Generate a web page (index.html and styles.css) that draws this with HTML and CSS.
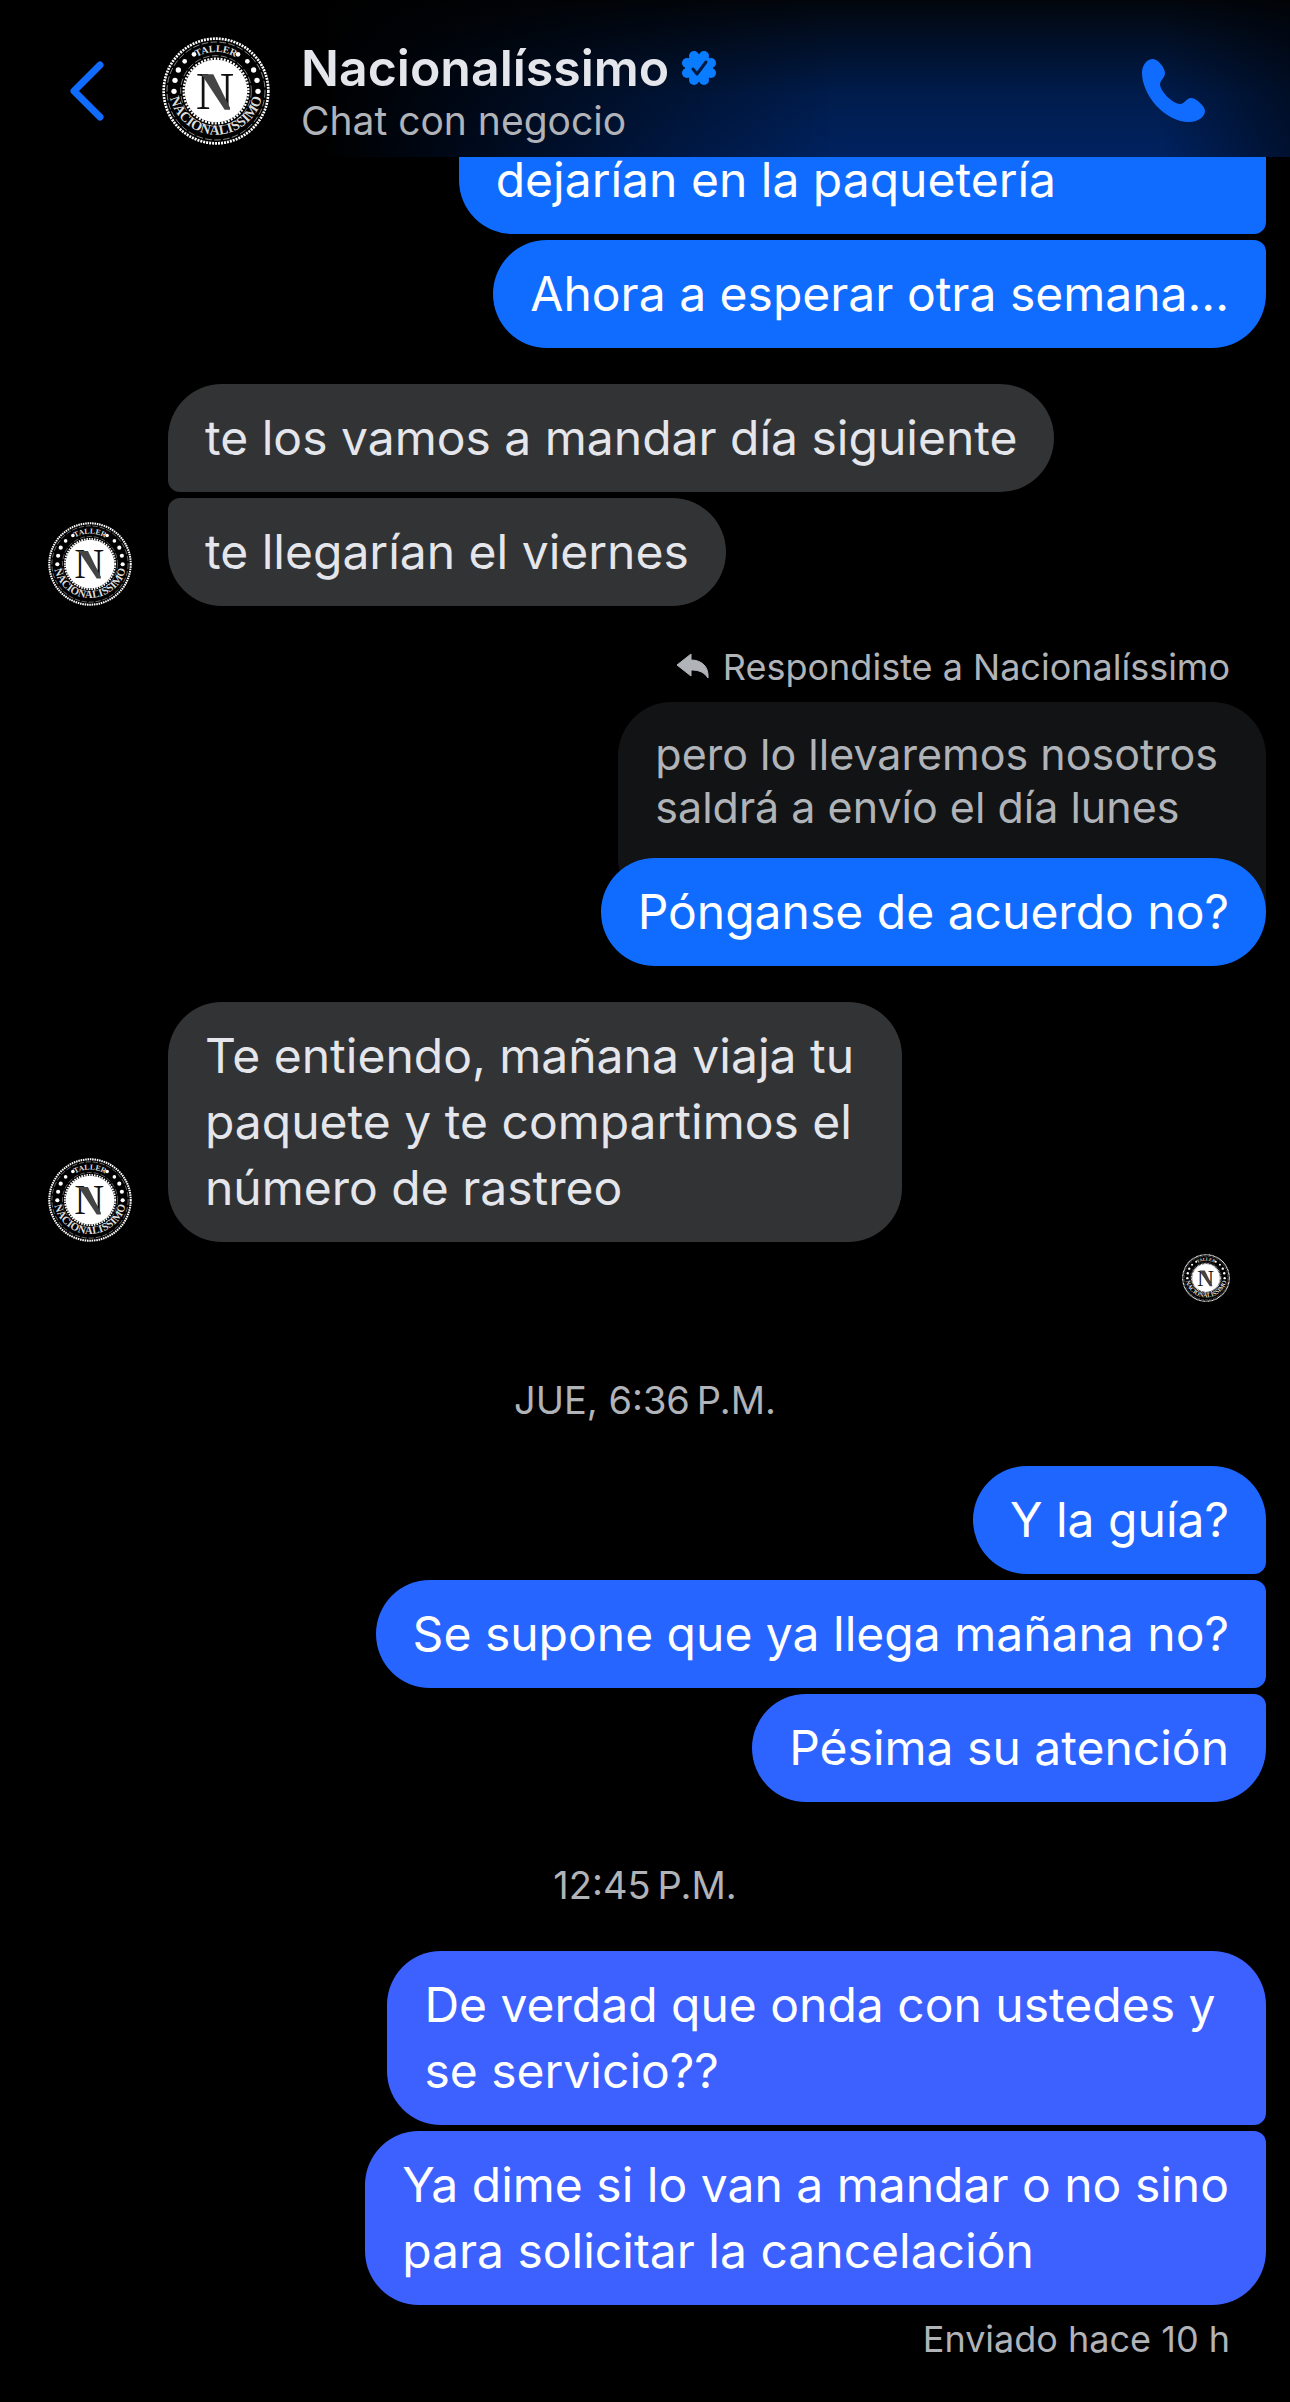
FILE: index.html
```
<!DOCTYPE html>
<html lang="es">
<head>
    <meta charset="UTF-8">
    <meta name="viewport" content="width=device-width, initial-scale=1.0">
    <title>Nacionalíssimo</title>
    <link rel="stylesheet" href="styles.css">
</head>
<body>
    <header class="header">
        <button class="icon-button back" aria-label="Atrás">
            <svg width="36" height="60" viewBox="0 0 36 60"><path d="M32 4 L6 30 L32 56" fill="none" stroke="#106cff" stroke-width="7" stroke-linecap="round" stroke-linejoin="round"/></svg>
        </button>
        <svg class="avatar-large" viewBox="-162 -162 324 324" role="img" aria-label="Nacionalíssimo">
            <!-- Logo, reused by the small avatars -->
            <g id="logo">
                <path id="arc-top" d="M-117 0 A117 117 0 0 1 117 0" fill="none"/>
                <path id="arc-bottom" d="M-141 -10 A141 141 0 1 0 141 -10" fill="none"/>
                <circle r="160" fill="#000"/>
                <circle r="157" fill="none" stroke="#fff" stroke-width="8" stroke-dasharray="6 3"/>
                <circle r="147" fill="none" stroke="#ccc" stroke-width="2" stroke-dasharray="20 7"/>
                <circle r="106" fill="none" stroke="#bbb" stroke-width="2" stroke-dasharray="20 7"/>
                <circle r="97" fill="none" stroke="#fff" stroke-width="7" stroke-dasharray="6 4"/>
                <circle r="94" fill="#fff"/>
                <g fill="#fff">
                    <circle cx="-126" cy="1" r="8"/><circle cx="126" cy="1" r="8"/>
                    <circle cx="-123" cy="-32" r="8"/><circle cx="123" cy="-32" r="8"/>
                    <circle cx="-113" cy="-63" r="8"/><circle cx="113" cy="-63" r="8"/>
                    <circle cx="-94" cy="-89" r="7"/><circle cx="94" cy="-89" r="7"/>
                    <circle cx="-66" cy="-110" r="7"/><circle cx="66" cy="-110" r="7"/>
                </g>
                <text class="logo-top"><textPath href="#arc-top" startOffset="50%">TALLER</textPath></text>
                <text class="logo-bottom"><textPath href="#arc-bottom" startOffset="50%">NACIONALISSIMO</textPath></text>
                <text class="logo-letter" x="-3" y="54">N</text>
                <path d="M-44 -50 H-8 L42 50 V56 H26 Z" fill="#444"/>
            </g>
        </svg>
        <div class="header-info">
            <h1 class="name">Nacionalíssimo
                <svg class="badge" viewBox="0 0 36 36" aria-label="Verificado"><g fill="#0a7cff"><circle cx="18" cy="18" r="14"/><circle cx="13" cy="6" r="5"/><circle cx="23" cy="6" r="5"/><circle cx="30" cy="13" r="5"/><circle cx="30" cy="23" r="5"/><circle cx="23" cy="30" r="5"/><circle cx="13" cy="30" r="5"/><circle cx="6" cy="23" r="5"/><circle cx="6" cy="13" r="5"/></g><path d="M12 19 L16 24 L25 12" fill="none" stroke="#001a40" stroke-width="3" stroke-linecap="round" stroke-linejoin="round"/></svg>
            </h1>
            <p class="subtitle">Chat con negocio</p>
        </div>
        <button class="icon-button call" aria-label="Llamar">
            <svg width="64" height="64" viewBox="0 0 64 64"><path d="M0 14 C0 6 5 0 11 0 C16 0 23 9 23 14 C23 19 18 21 18 26 C19 33 31 45 38 45 C43 45 44 39 49 39 C54 39 63 47 63 52 C63 57 57 63 47 63 C22 63 0 35 0 14 Z" fill="#106cff"/></svg>
        </button>
    </header>

    <main class="chat">
        <div class="group sent">
            <p class="bubble clipped">dejarían en la paquetería</p>
            <p class="bubble">Ahora a esperar otra semana...</p>
        </div>

        <div class="row">
            <svg class="avatar" viewBox="-162 -162 324 324" aria-hidden="true"><use href="#logo"/></svg>
            <div class="group received">
                <p class="bubble">te los vamos a mandar día siguiente</p>
                <p class="bubble">te llegarían el viernes</p>
            </div>
        </div>

        <div class="group sent reply">
            <p class="reply-label">
                <svg width="34" height="28" viewBox="0 0 34 28" aria-hidden="true"><path d="M1 12 L15 1 V7 C26 7 33 14 32 25 C28 19 23 17 15 17 V23 Z" fill="#b0b3b8" stroke="#b0b3b8" stroke-linejoin="round"/></svg>
                Respondiste a Nacionalíssimo
            </p>
            <blockquote class="quote">pero lo llevaremos nosotros<br>saldrá a envío el día lunes</blockquote>
            <p class="bubble">Pónganse de acuerdo no?</p>
        </div>

        <div class="row">
            <svg class="avatar" viewBox="-162 -162 324 324" aria-hidden="true"><use href="#logo"/></svg>
            <div class="group received">
                <p class="bubble">Te entiendo, mañana viaja tu<br>paquete y te compartimos el&nbsp;<br>número de rastreo</p>
            </div>
        </div>
        <svg class="seen" viewBox="-162 -162 324 324" role="img" aria-label="Visto por Nacionalíssimo"><use href="#logo"/></svg>

        <time class="date">JUE, 6:36&#8201;P.M.</time>

        <div class="group sent tone-1">
            <p class="bubble">Y la guía?</p>
            <p class="bubble">Se supone que ya llega mañana no?</p>
            <p class="bubble">Pésima su atención</p>
        </div>

        <time class="date">12:45&#8201;P.M.</time>

        <div class="group sent tone-2">
            <p class="bubble">De verdad que onda con ustedes y&nbsp;<br>se servicio??</p>
            <p class="bubble">Ya dime si lo van a mandar o no sino<br>para solicitar la cancelación</p>
        </div>
        <p class="status">Enviado hace 10 h</p>
    </main>
</body>
</html>
```
FILE: styles.css
```
* {
    box-sizing: border-box;
}
body {
    margin: 0;
    background: #000;
    color: #e4e6eb;
    font-family: Inter, "Liberation Sans", sans-serif;
}
h1, p, blockquote {
    margin: 0;
}

/* Logo lettering */
.logo-top,
.logo-bottom,
.logo-letter {
    font-family: "Liberation Serif", serif;
    text-anchor: middle;
}
.logo-top {
    font-size: 30px;
    font-weight: bold;
    fill: #ddd;
}
.logo-bottom {
    font-size: 42px;
    font-weight: bold;
    fill: #ddd;
}
.logo-letter {
    font-size: 160px;
    fill: #111;
}

/* Header */
.header {
    position: relative;
    z-index: 1;
    display: flex;
    align-items: center;
    height: 157px;
    padding: 24px 84px 0 68px;
    background:
        linear-gradient(to right, #000 25%, transparent 65%, transparent 90%, rgba(0, 0, 0, 0.5)),
        linear-gradient(#02060c, #001c4c 60%, #002260);
}
.icon-button {
    display: flex;
    padding: 0;
    border: 0;
    background: none;
}
.avatar-large {
    width: 108px;
    height: 108px;
    margin: 0 31px 0 58px;
}
.header-info {
    flex: 1;
    padding-top: 6px;
}
.name {
    display: flex;
    align-items: center;
    gap: 12px;
    font-size: 50px;
    line-height: 54px;
    font-weight: 600;
}
.badge {
    width: 36px;
    height: 36px;
}
.subtitle {
    font-size: 39px;
    line-height: 52px;
    color: #b0b3b8;
}

/* Messages */
.chat {
    display: flex;
    flex-direction: column;
    margin-top: -10px;
    padding: 0 24px 36px;
}
.group {
    display: flex;
    flex-direction: column;
    gap: 6px;
}
.sent {
    align-items: flex-end;
}
.received {
    align-items: flex-start;
}
.bubble {
    padding: 21px 37px;
    border-radius: 54px;
    font-size: 48px;
    line-height: 66px;
}
.sent .bubble {
    background: #106cff;
    color: #fff;
}
.sent .bubble:not(:last-child) {
    border-bottom-right-radius: 12px;
}
.sent .bubble + .bubble {
    border-top-right-radius: 12px;
}
.sent .clipped {
    width: 65%;
    padding-top: 0;
    border-top-left-radius: 0;
    border-top-right-radius: 0;
}
.received .bubble {
    background: #323335;
}
.received .bubble:not(:last-child) {
    border-bottom-left-radius: 12px;
}
.received .bubble + .bubble {
    border-top-left-radius: 12px;
}
.tone-1 .bubble {
    background: #1f66ff;
}
.tone-1 .bubble:nth-child(2) {
    background: #2665ff;
}
.tone-1 .bubble:nth-child(3) {
    background: #2d63ff;
}
.tone-2 .bubble {
    background: #3c61ff;
}
.row {
    display: flex;
    align-items: flex-end;
    gap: 36px;
    margin-top: 36px;
    padding-left: 24px;
}
.avatar {
    width: 84px;
    height: 84px;
}

/* Quoted reply */
.reply {
    gap: 0;
    margin-top: 36px;
}
.reply-label {
    display: flex;
    align-items: center;
    gap: 13px;
    padding-right: 36px;
    font-size: 36px;
    line-height: 50px;
    color: #b0b3b8;
}
.quote {
    margin-top: 10px;
    padding: 26px 48px 78px 37px;
    border-radius: 54px 54px 0 54px;
    background: #121315;
    font-size: 43px;
    line-height: 53px;
    color: #b0b3b8;
}
.reply .bubble {
    margin-top: -54px;
    border-radius: 54px;
}

.seen {
    align-self: flex-end;
    width: 48px;
    height: 48px;
    margin: 12px 36px 15px 0;
}
.date {
    margin: 55px 0 38px;
    text-align: center;
    font-size: 38px;
    line-height: 56px;
    color: #b0b3b8;
}
.status {
    margin-top: 10px;
    padding-right: 36px;
    text-align: right;
    font-size: 36px;
    line-height: 48px;
    color: #b0b3b8;
}
```
